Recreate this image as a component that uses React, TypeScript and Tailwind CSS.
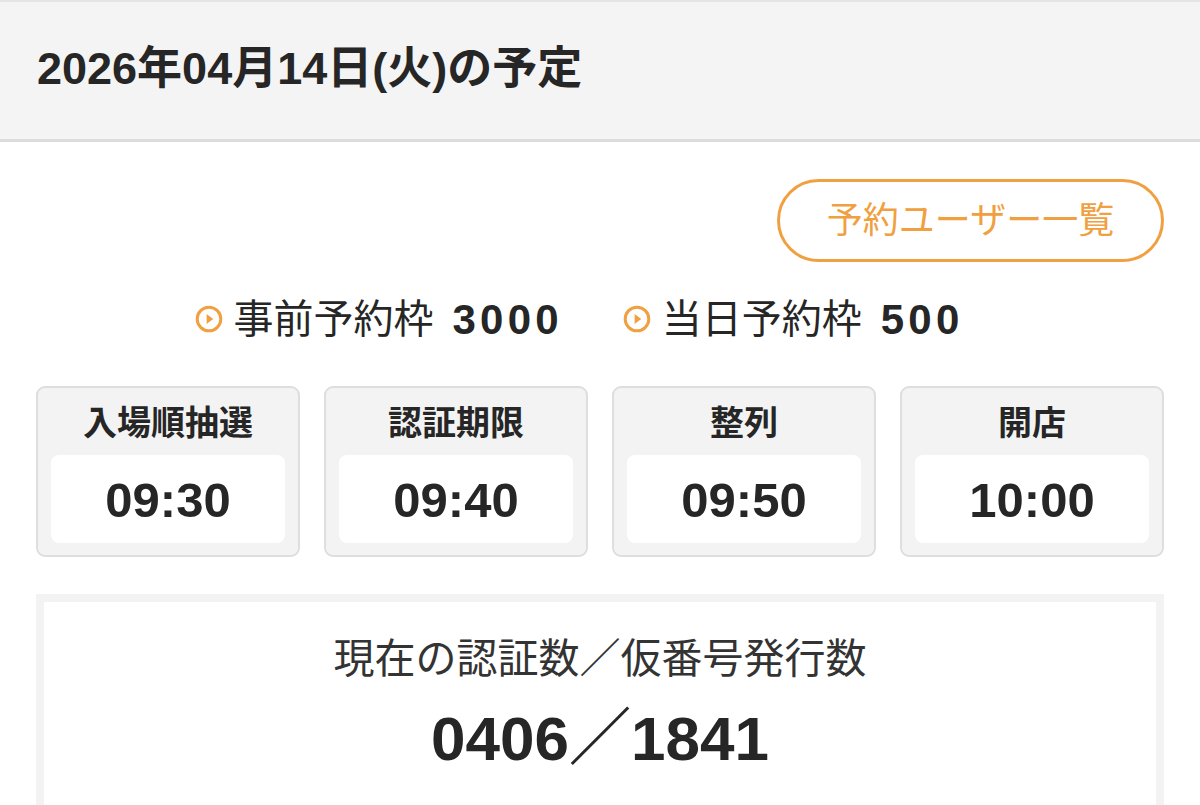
import { Fragment } from "react";

const font = { fontFamily: '"Liberation Sans", "Noto Sans CJK JP", sans-serif' };

const times = [
  { label: "入場順抽選", time: "09:30" },
  { label: "認証期限", time: "09:40" },
  { label: "整列", time: "09:50" },
  { label: "開店", time: "10:00" },
];

function PlayIcon() {
  return (
    <svg width="28" height="28" viewBox="0 0 28 28" className="shrink-0">
      <circle cx="14" cy="14" r="11.8" fill="none" stroke="#f0a040" strokeWidth="3" />
      <path d="M11.6 8.9 L18.3 14 L11.6 19.1 Z" fill="#f0a040" />
    </svg>
  );
}

export default function App() {
  return (
    <div className="w-[1200px] h-[805px] overflow-hidden bg-white text-[#262626]" style={font}>
      <div className="h-[142px] bg-[#f4f4f4] border-t-2 border-t-[#e4e4e4] border-b-[3px] border-b-[#dcdcdc] flex items-center px-[37px]">
        <h1 className="text-[45px] font-bold pb-[4px]">2026年04月14日(火)の予定</h1>
      </div>

      <div className="px-[36px]">
        <div className="flex justify-end pt-[37px]">
          <button className="w-[387px] h-[83px] rounded-full border-[3px] border-[#f0a040] text-[#f0a040] text-[36px] flex items-center justify-center">
            予約ユーザー一覧
          </button>
        </div>

        <div className="flex justify-center items-center gap-[64px] mt-[18px] h-[78px] text-[40px] pr-[46px]">
          {[
            ["事前予約枠", "3000"],
            ["当日予約枠", "500"],
          ].map(([k, v]) => (
            <Fragment key={k}>
              <div className="flex items-center gap-[11px]">
                <PlayIcon />
                <span>{k}</span>
                <span className="text-[42px] font-bold tracking-[0.1em] ml-[8px] -mr-[4px]">{v}</span>
              </div>
            </Fragment>
          ))}
        </div>

        <div className="grid grid-cols-4 gap-[24px] mt-[28px]">
          {times.map((t) => (
            <div key={t.label} className="h-[171px] rounded-[9px] border-2 border-[#dedede] bg-[#f3f3f3] px-[13px] pb-[12px] flex flex-col">
              <div className="h-[67px] flex items-center justify-center text-[34px] font-bold pt-[4px]">{t.label}</div>
              <div className="flex-1 rounded-[8px] bg-white flex items-center justify-center text-[49px] font-bold pt-[4px]">
                {t.time}
              </div>
            </div>
          ))}
        </div>

        <div className="mt-[37px] h-[260px] border-[8px] border-[#f3f3f3] bg-white flex flex-col items-center">
          <div className="mt-[27px] text-[41px] text-[#333]">現在の認証数／仮番号発行数</div>
          <div className="mt-[1px] text-[62px] font-bold">0406／1841</div>
        </div>
      </div>
    </div>
  );
}
